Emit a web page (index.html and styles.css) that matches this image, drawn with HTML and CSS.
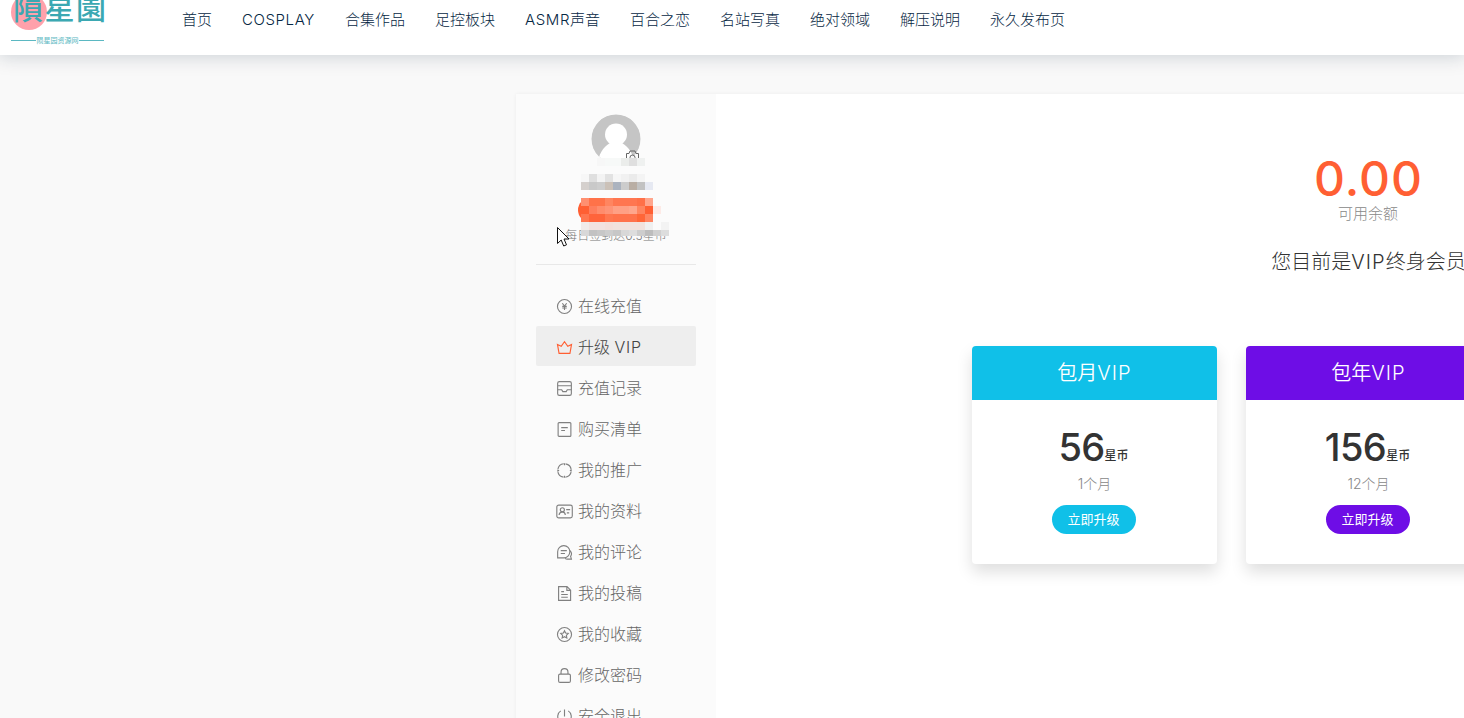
FILE: index.html
```html
<!DOCTYPE html>
<html lang="zh-CN">
<head>
    <meta charset="UTF-8">
    <meta name="viewport" content="width=device-width, initial-scale=1.0">
    <title>升级 VIP</title>
    <link rel="stylesheet" href="styles.css">
</head>
<body>
    <header class="header">
        <a class="logo" href="#">
            <svg width="110" height="55" viewBox="0 0 110 55">
                <circle cx="29" cy="12" r="18" fill="#ffa1ab"/>
                <text class="logo-name" x="13" y="19" textLength="93">隕星園</text>
                <path d="M11 40.5h25M79 40.5h25" stroke="#5bb8c2"/>
                <text class="logo-sub" x="36.500" y="43" textLength="42">陨星园资源网</text>
            </svg>
        </a>
        <nav class="nav">
            <a href="#">首页</a>
            <a href="#" class="nav-cosplay">COSPLAY</a>
            <a href="#">合集作品</a>
            <a href="#">足控板块</a>
            <a href="#" class="nav-asmr"><span>ASMR</span>声音</a>
            <a href="#">百合之恋</a>
            <a href="#">名站写真</a>
            <a href="#">绝对领域</a>
            <a href="#">解压说明</a>
            <a href="#">永久发布页</a>
        </nav>
    </header>

    <div class="container">
        <aside class="sidebar">
            <div class="profile">
                <svg class="avatar" width="50" height="50" viewBox="0 0 50 50">
                    <defs><clipPath id="round"><circle cx="25" cy="25" r="24.500"/></clipPath></defs>
                    <g clip-path="url(#round)">
                        <circle cx="25" cy="25" r="25" fill="#c5c5c5"/>
                        <circle cx="25" cy="20.500" r="11" fill="#fff"/>
                        <path d="M7 50c0-9 5-17 12-21h12c7 4 12 12 12 21z" fill="#fff"/>
                    </g>
                </svg>
                <svg class="camera" width="15" height="14" viewBox="0 0 15 14" fill="none" stroke="#666">
                    <path d="M1.500 3.500h2.500l1-2.500h5l1 2.500h2.500v9h-12z"/>
                    <circle cx="7.500" cy="7.500" r="2.500"/>
                </svg>
                <span class="checkin"></span>
                <p class="tip">每日签到送0.5星币</p>
                <svg class="mosaic" width="88" height="78" viewBox="0 0 88 78" shape-rendering="crispEdges">
                    <path d="M0 8h88v70H0zM16 0h48v8H16z" fill="#fbfbfb"/>
                    <path d="M16 0h8v8h-8z" fill="#f7f7f7"/><path d="M24 0h16v8H24z" fill="#f7f9f8"/><path d="M40 0h8v8h-8z" fill="#ebedeb"/><path d="M48 0h8v8h-8z" fill="#dfdfdf"/><path d="M56 0h8v8h-8z" fill="#eff1f0"/>
                    <path d="M0 16h8v8H0z" fill="#f7f7f7"/><path d="M8 16h8v8H8z" fill="#dfdfdf"/><path d="M16 16h8v8h-8z" fill="#f3f3f3"/><path d="M24 16h8v8h-8z" fill="#e2e2e2"/><path d="M32 16h8v8h-8z" fill="#f6f6f6"/><path d="M40 16h8v8h-8z" fill="#f1f1f1"/><path d="M48 16h8v8h-8z" fill="#ebebeb"/><path d="M56 16h8v8h-8z" fill="#f4f4f4"/>
                    <path d="M0 24h8v8H0z" fill="#d5d0cd"/><path d="M8 24h8v8H8z" fill="#c9c9c9"/><path d="M16 24h8v8h-8z" fill="#cdcdcd"/><path d="M24 24h8v8h-8z" fill="#cbc1b8"/><path d="M32 24h8v8h-8z" fill="#abb3bf"/><path d="M40 24h8v8h-8z" fill="#ccc"/><path d="M48 24h8v8h-8z" fill="#b9aea4"/><path d="M56 24h8v8h-8z" fill="#c2c2c2"/><path d="M64 24h8v8h-8z" fill="#e6e9f2"/>
                    <path d="M0 40h8v8H0z" fill="#ff8f70"/><path d="M8 40h16v8H8z" fill="#ff7249"/><path d="M24 40h8v8h-8z" fill="#ff8560"/><path d="M32 40h24v8H32z" fill="#ff7650"/><path d="M56 40h8v8h-8z" fill="#ff7048"/><path d="M64 40h8v8h-8z" fill="#ffa58c"/>
                    <path d="M0 48h8v8H0zM64 48h8v8h-8z" fill="#ff5f33"/><path d="M8 48h8v8H8z" fill="#ff7e5d"/><path d="M16 48h8v8h-8z" fill="#ff8c6c"/><path d="M24 48h8v8h-8z" fill="#ff9376"/><path d="M32 48h16v8H32z" fill="#ffa085"/><path d="M48 48h8v8h-8z" fill="#ffa68c"/><path d="M56 48h8v8h-8z" fill="#ff8560"/><path d="M72 48h8v8h-8z" fill="#fdeae6"/>
                    <path d="M0 56h8v8H0z" fill="#ff7650"/><path d="M8 56h16v8H8z" fill="#ff643b"/><path d="M24 56h8v8h-8z" fill="#ff764f"/><path d="M32 56h24v8H32z" fill="#ff724b"/><path d="M56 56h8v8h-8z" fill="#ff6638"/><path d="M64 56h8v8h-8z" fill="#ff8562"/>
                    <path d="M0 64h8v8H0z" fill="#f1ebea"/><path d="M8 64h16v8H8z" fill="#f2e2df"/><path d="M24 64h8v8h-8z" fill="#f3dfda"/><path d="M32 64h32v8H32z" fill="#f1e2dd"/><path d="M64 64h8v8h-8z" fill="#f0f0f0"/><path d="M80 64h8v8h-8z" fill="#f3f3f3"/>
                    <path d="M0 72h8v6H0zM40 72h8v6h-8z" fill="#d8d8d8"/><path d="M8 72h8v6H8z" fill="#c2c2c2"/><path d="M16 72h8v6h-8zM32 72h8v6h-8z" fill="#c7c7c7"/><path d="M24 72h8v6h-8zM56 72h8v6h-8z" fill="#cdcdcd"/><path d="M48 72h8v6h-8zM80 72h8v6h-8z" fill="#ddd"/><path d="M64 72h8v6h-8z" fill="#bdbdbd"/><path d="M72 72h8v6h-8z" fill="#d0d0d0"/>
                </svg>
                <svg class="cursor" width="13" height="20" viewBox="0 0 13 20">
                    <path d="M.5.500v16l3.700-3.500 2.500 6 2.800-1.200L7 12h5z" fill="#fff" stroke="#111"/>
                </svg>
            </div>
            <ul class="menu">
                <li><a href="#"><svg class="icon" viewBox="0 0 16 16"><circle cx="8" cy="8" r="7.500"/><path d="M5.700 4.500L8 7.500l2.300-3M8 7.500v4.200M5.600 7.800h4.800M5.600 9.600h4.800"/></svg>在线充值</a></li>
                <li class="active"><a href="#"><svg class="icon" viewBox="0 0 16 16"><path d="M.5 4.700l4 2L8 1.800l3.500 4.900 4-2-1.700 9.600H2.200z"/></svg>升级 <span>VIP</span></a></li>
                <li><a href="#"><svg class="icon" viewBox="0 0 16 16"><rect x=".7" y=".7" width="14.600" height="14.600" rx="1.800"/><path d="M.7 5h14.600M.7 9.300H5l1.200 2h3.600l1.200-2h4.300"/></svg>充值记录</a></li>
                <li><a href="#"><svg class="icon" viewBox="0 0 16 16"><rect x="1.200" y=".7" width="13.600" height="14.600" rx="1"/><path d="M4.500 6h7M4.500 9h4"/></svg>购买清单</a></li>
                <li><a href="#"><svg class="icon" viewBox="0 0 16 16"><circle cx="8" cy="8" r="7.200" stroke-dasharray="9.300 2" stroke-dashoffset="-1"/><path d="M8 .3v2M8 13.700v2M.3 8h2M13.700 8h2"/></svg>我的推广</a></li>
                <li><a href="#"><svg class="icon" viewBox="0 0 16 16"><rect x="-.2" y="1.200" width="16.500" height="13.600" rx="2"/><circle cx="5.700" cy="6.200" r="2.200"/><path d="M2.200 11.700c.3-2 1.600-3.300 3.500-3.300s3 1.300 3.200 3.300M9.800 6H14M10.500 9.500H13"/></svg>我的资料</a></li>
                <li><a href="#"><svg class="icon" viewBox="0 0 16 16"><path d="M.7 13.700V7.100a6.500 6.500 0 1 1 6.500 6.600zM4 6h6.500M4 9h4.500M13.700 5.800c2 2 2 4.700.8 6.400l.9 2.900H11c-1 0-1.800-.3-2.500-.8"/></svg>我的评论</a></li>
                <li><a href="#"><svg class="icon" viewBox="0 0 16 16"><path d="M1.700.7h9l3.800 3.800v10.800H1.700zM10.500.7v4h4M4.500 6h3M4.500 9h7M4.500 12h7"/></svg>我的投稿</a></li>
                <li><a href="#"><svg class="icon" viewBox="0 0 16 16"><circle cx="8" cy="8" r="7.500"/><path d="M8 4l1.200 2.500 2.800.4-2 2 .5 2.800L8 10.300l-2.500 1.400.5-2.800-2-2 2.800-.4z"/></svg>我的收藏</a></li>
                <li><a href="#"><svg class="icon" viewBox="0 0 16 16"><rect x="1.700" y="6.500" width="12.600" height="8.800" rx="1.500"/><path d="M4.300 6.500V4.400a3.700 3.700 0 0 1 7.400 0v2.100"/></svg>修改密码</a></li>
                <li><a href="#"><svg class="icon" viewBox="0 0 16 16"><path d="M8 .5v7.500M4 2a7.200 7.200 0 1 0 8 0"/></svg>安全退出</a></li>
            </ul>
        </aside>

        <main class="content">
            <div class="charge">
                <div class="balance">0.00</div>
                <div class="balance-label">可用余额</div>
                <p class="status">您目前是<span>VIP</span>终身会员</p>
                <div class="plans">
                    <div class="plan plan-month">
                        <h3>包月<span>VIP</span></h3>
                        <div class="price">56<small>星币</small></div>
                        <p class="period">1个月</p>
                        <a class="btn" href="#">立即升级</a>
                    </div>
                    <div class="plan plan-year">
                        <h3>包年<span>VIP</span></h3>
                        <div class="price">156<small>星币</small></div>
                        <p class="period">12个月</p>
                        <a class="btn" href="#">立即升级</a>
                    </div>
                </div>
            </div>
        </main>
    </div>
</body>
</html>
```

FILE: styles.css
```css
* {
    box-sizing: border-box;
}
body {
    margin: 0;
    height: 718px;
    overflow: hidden;
    background: #f9f9f9;
    font-family: Inter, "Noto Sans CJK SC", sans-serif;
    font-weight: 300;
    color: #333;
}
a {
    color: inherit;
    text-decoration: none;
}

/* Header */
.header {
    position: relative;
    display: flex;
    height: 55px;
    background: #fff;
    box-shadow: 0 0 18px 2px rgba(0, 36, 60, 0.18);
}
.logo {
    width: 182px;
}
.logo svg {
    display: block;
}
.logo-name {
    font-family: "Noto Sans CJK TC", sans-serif;
    font-size: 30px;
    font-weight: 500;
    fill: #3ba8b2;
}
.logo-sub {
    font-size: 7px;
    font-weight: 400;
    fill: #5bb8c2;
}
.nav {
    display: flex;
    gap: 30px;
    height: 40px;
    line-height: 39px;
    font-size: 15px;
    color: #062743;
    white-space: nowrap;
}
.nav-cosplay {
    width: 73px;
    letter-spacing: 0.6px;
}
.nav-asmr {
    width: 75px;
}
.nav-asmr span {
    letter-spacing: 0.6px;
}

/* Layout */
.container {
    display: flex;
    width: 1504px;
    height: 700px;
    margin: 39px 0 0 516px;
    background: #fff;
    box-shadow: 0 0 4px rgba(0, 0, 0, 0.05);
}
.sidebar {
    flex: none;
    width: 200px;
    padding: 20px;
    background: #fbfbfb;
}

/* Profile */
.profile {
    position: relative;
    height: 151px;
    border-bottom: 1px solid #e8e8e8;
}
.avatar {
    display: block;
    margin: 0 auto;
}
.camera {
    position: absolute;
    left: 89px;
    top: 36px;
}
.checkin {
    display: block;
    width: 75px;
    height: 24px;
    margin: 34px 0 0 42px;
    border-radius: 12px;
    background: #ff5f33;
}
.tip {
    margin: 4px 0 0;
    font-size: 12px;
    line-height: 19px;
    text-align: center;
    color: #777;
}
.mosaic {
    position: absolute;
    left: 45px;
    top: 44px;
}
.cursor {
    position: absolute;
    left: 21px;
    top: 113px;
}

/* Menu */
.menu {
    margin: 20px 0 0;
    padding: 0;
    list-style: none;
}
.menu li {
    height: 40px;
    margin-bottom: 1px;
    border-radius: 2px;
    color: #666;
}
.menu a {
    display: block;
    padding: 1px 0 0 21px;
    font-size: 16px;
    line-height: 40px;
    white-space: nowrap;
}
.menu span {
    letter-spacing: 0.8px;
}
.menu .active {
    background: #eee;
    color: #444;
}
.icon {
    width: 15px;
    height: 15px;
    margin-right: 6px;
    vertical-align: -2px;
    overflow: visible;
    fill: none;
    stroke: #808080;
    stroke-width: 1.200;
}
.active .icon {
    stroke: #ff5f33;
}

/* Balance */
.charge {
    width: 793px;
    margin-left: 256px;
    padding-top: 60px;
    text-align: center;
}
.balance {
    height: 50px;
    font-size: 48px;
    line-height: 50px;
    font-weight: 500;
    letter-spacing: 1px;
    color: #ff5f33;
}
.balance-label {
    margin-left: -1px;
    font-size: 15px;
    line-height: 20px;
    color: #888;
}
.status {
    margin: 25px 0 71px;
    font-size: 20px;
    line-height: 26px;
    color: #333;
}
.status span,
.plan h3 span {
    letter-spacing: 1px;
}

/* Plans */
.plans {
    display: grid;
    grid-template-columns: repeat(3, 245px);
    gap: 29px;
}
.plan {
    height: 218px;
    border-radius: 4px;
    background: #fff;
    box-shadow: 0 8px 16px rgba(0, 0, 0, 0.13);
}
.plan h3 {
    height: 54px;
    margin: 0;
    border-radius: 4px 4px 0 0;
    font-size: 20px;
    line-height: 55px;
    font-weight: 350;
    color: #fff;
}
.price {
    height: 60px;
    margin: 17px 2px 0 0;
    font-size: 38px;
    line-height: 60px;
    font-weight: 500;
    letter-spacing: -0.6px;
    color: #333;
}
.price small {
    position: relative;
    top: -1px;
    font-size: 12px;
    letter-spacing: 0;
}
.period {
    margin: -3px 0 11px;
    font-size: 14px;
    line-height: 20px;
    color: #888;
}
.btn {
    display: inline-block;
    width: 84px;
    margin-right: 2px;
    border-radius: 15px;
    font-size: 13px;
    line-height: 29px;
    font-weight: 400;
    color: #fff;
}
.plan-month h3,
.plan-month .btn {
    background: #10c0e8;
}
.plan-year h3,
.plan-year .btn {
    background: #6e0de6;
}
```
